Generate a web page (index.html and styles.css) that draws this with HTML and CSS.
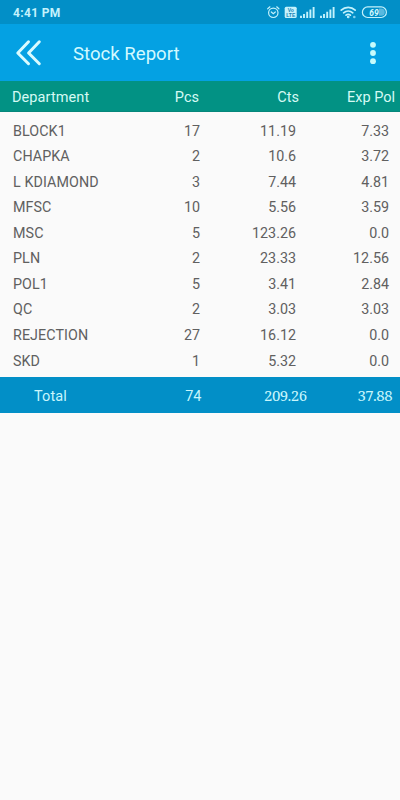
FILE: index.html
```html
<!DOCTYPE html>
<html lang="en">
<head>
<meta charset="utf-8">
<title>Stock Report</title>
<link rel="stylesheet" href="styles.css">
</head>
<body>
<div class="status">
  <span class="time">4:41 PM</span>
  <svg class="status-icons" width="134" height="24" viewBox="266 0 134 24" fill="none" stroke="#c4f2fc" stroke-linecap="round">
    <circle cx="273.3" cy="12.8" r="4.7" stroke-width="1.2"/>
    <path d="M267.7 8.8l2.2-2M278.9 8.8l-2.2-2M271.3 12l2 1.7 2-1.7" stroke-width="1.2"/>
    <rect x="284.7" y="6.8" width="12" height="11.2" rx="1.5" fill="#c4f2fc" stroke="none"/>
    <text class="lte" x="290.7" y="12.2">Vo</text>
    <text class="lte" x="290.7" y="17.2">LTE</text>
    <g stroke-width="1.9" stroke-linecap="butt">
      <path d="M301 18v-2.2M304 18v-4M307.2 18v-6.2M310.4 18v-8.6M313.6 18V7"/>
      <path d="M321 18v-2.2M324 18v-4M327.2 18v-6.2M330.4 18v-8.6M333.6 18V7"/>
    </g>
    <g stroke-width="1.7">
      <path d="M341.2 10.2c4-3.8 10-3.8 14 0M343.6 12.8c2.7-2.4 6.5-2.4 9.2 0M346 15.2c1.4-1.1 3-1.1 4.4 0"/>
      <circle cx="348.2" cy="17" r=".5"/>
    </g>
    <circle cx="354.3" cy="17" r="1.3" fill="#7fd0f0" stroke="none"/>
    <rect x="362.4" y="6.9" width="24" height="10.6" rx="5.3" stroke-width="1.2"/>
    <path d="M379 8.6h2.2a3.6 3.6 0 0 1 0 7.2H379z" fill="#58b9df" stroke="none"/>
    <text class="battery" x="374" y="15.5">69</text>
  </svg>
</div>
<header class="bar">
  <svg class="back" width="28" height="28" viewBox="0 0 28 28" fill="none" stroke="#d9fbff" stroke-width="3" stroke-linecap="round" stroke-linejoin="round"><path d="M14.5 2.8L3.8 14l10.7 10.7M25.3 2.8L14.6 14l10.7 10.7"/></svg>
  <h1 class="title">Stock Report</h1>
  <svg class="more" width="8" height="24" viewBox="0 0 8 24" fill="#c6fbfc"><circle cx="4" cy="3.8" r="2.9"/><circle cx="4" cy="12" r="2.9"/><circle cx="4" cy="20.2" r="2.9"/></svg>
</header>
<div class="row head"><span>Department</span><span>Pcs</span><span>Cts</span><span>Exp Pol</span></div>
<main class="rows">
  <div class="row"><span>BLOCK1</span><span>17</span><span>11.19</span><span>7.33</span></div>
  <div class="row"><span>CHAPKA</span><span>2</span><span>10.6</span><span>3.72</span></div>
  <div class="row"><span>L KDIAMOND</span><span>3</span><span>7.44</span><span>4.81</span></div>
  <div class="row"><span>MFSC</span><span>10</span><span>5.56</span><span>3.59</span></div>
  <div class="row"><span>MSC</span><span>5</span><span>123.26</span><span>0.0</span></div>
  <div class="row"><span>PLN</span><span>2</span><span>23.33</span><span>12.56</span></div>
  <div class="row"><span>POL1</span><span>5</span><span>3.41</span><span>2.84</span></div>
  <div class="row"><span>QC</span><span>2</span><span>3.03</span><span>3.03</span></div>
  <div class="row"><span>REJECTION</span><span>27</span><span>16.12</span><span>0.0</span></div>
  <div class="row"><span>SKD</span><span>1</span><span>5.32</span><span>0.0</span></div>
</main>
<div class="row total"><span>Total</span><span>74</span><span class="serif">209.26</span><span class="serif">37.88</span></div>
</body>
</html>
```

FILE: styles.css
```css
* { box-sizing: border-box; }
body { margin: 0; min-height: 800px; background: #fafafa; font-family: Roboto, sans-serif; }
.status { height: 24px; background: #028fc7; display: flex; justify-content: space-between; }
.time { padding-left: 13px; font-size: 12px; line-height: 26px; font-weight: 700; letter-spacing: .35px; color: #c4f2fc; }
.lte { font: 700 5px "Liberation Sans", sans-serif; fill: #1684b5; stroke: none; text-anchor: middle; }
.battery { font: italic 700 8.5px Roboto, sans-serif; fill: #d5faff; stroke: none; text-anchor: middle; }
.bar { height: 57px; background: #04a1e3; display: flex; align-items: center; padding: 0 23px 0 14px; }
.title { margin: 2px 0 0 31px; font-size: 18.6px; font-weight: 400; line-height: 24px; color: #d2f9ff; }
.more { margin-left: auto; }
.row { display: grid; grid-template-columns: 100px 100px 96px 93px; align-items: center; height: 25.55px; font-size: 14.3px; color: #606060; white-space: nowrap; }
.row span { text-align: right; }
.row span:first-child { text-align: left; padding-left: 13px; letter-spacing: .08px; }
.rows { padding: 6.4px 0 4px; height: 265.5px; }
.head { grid-template-columns: 100px 99px 100px 96px; height: 30.5px; padding-top: 3px; background: #029284; border-bottom: 1px solid #06877b; font-size: 14.5px; color: #d5faf4; }
.head span:first-child { padding-left: 12px; }
.total { grid-template-columns: 100px 101.5px 105px 85.5px; height: 36px; padding-top: 3px; background: #028fc7; font-size: 14.5px; color: #c8f6fc; }
.total span:first-child { padding-left: 34px; }
.total .serif { font: 15px/17px "Noto Serif", "Droid Serif", "DejaVu Serif Condensed", serif; letter-spacing: -.55px; margin-top: -3px; }
```
